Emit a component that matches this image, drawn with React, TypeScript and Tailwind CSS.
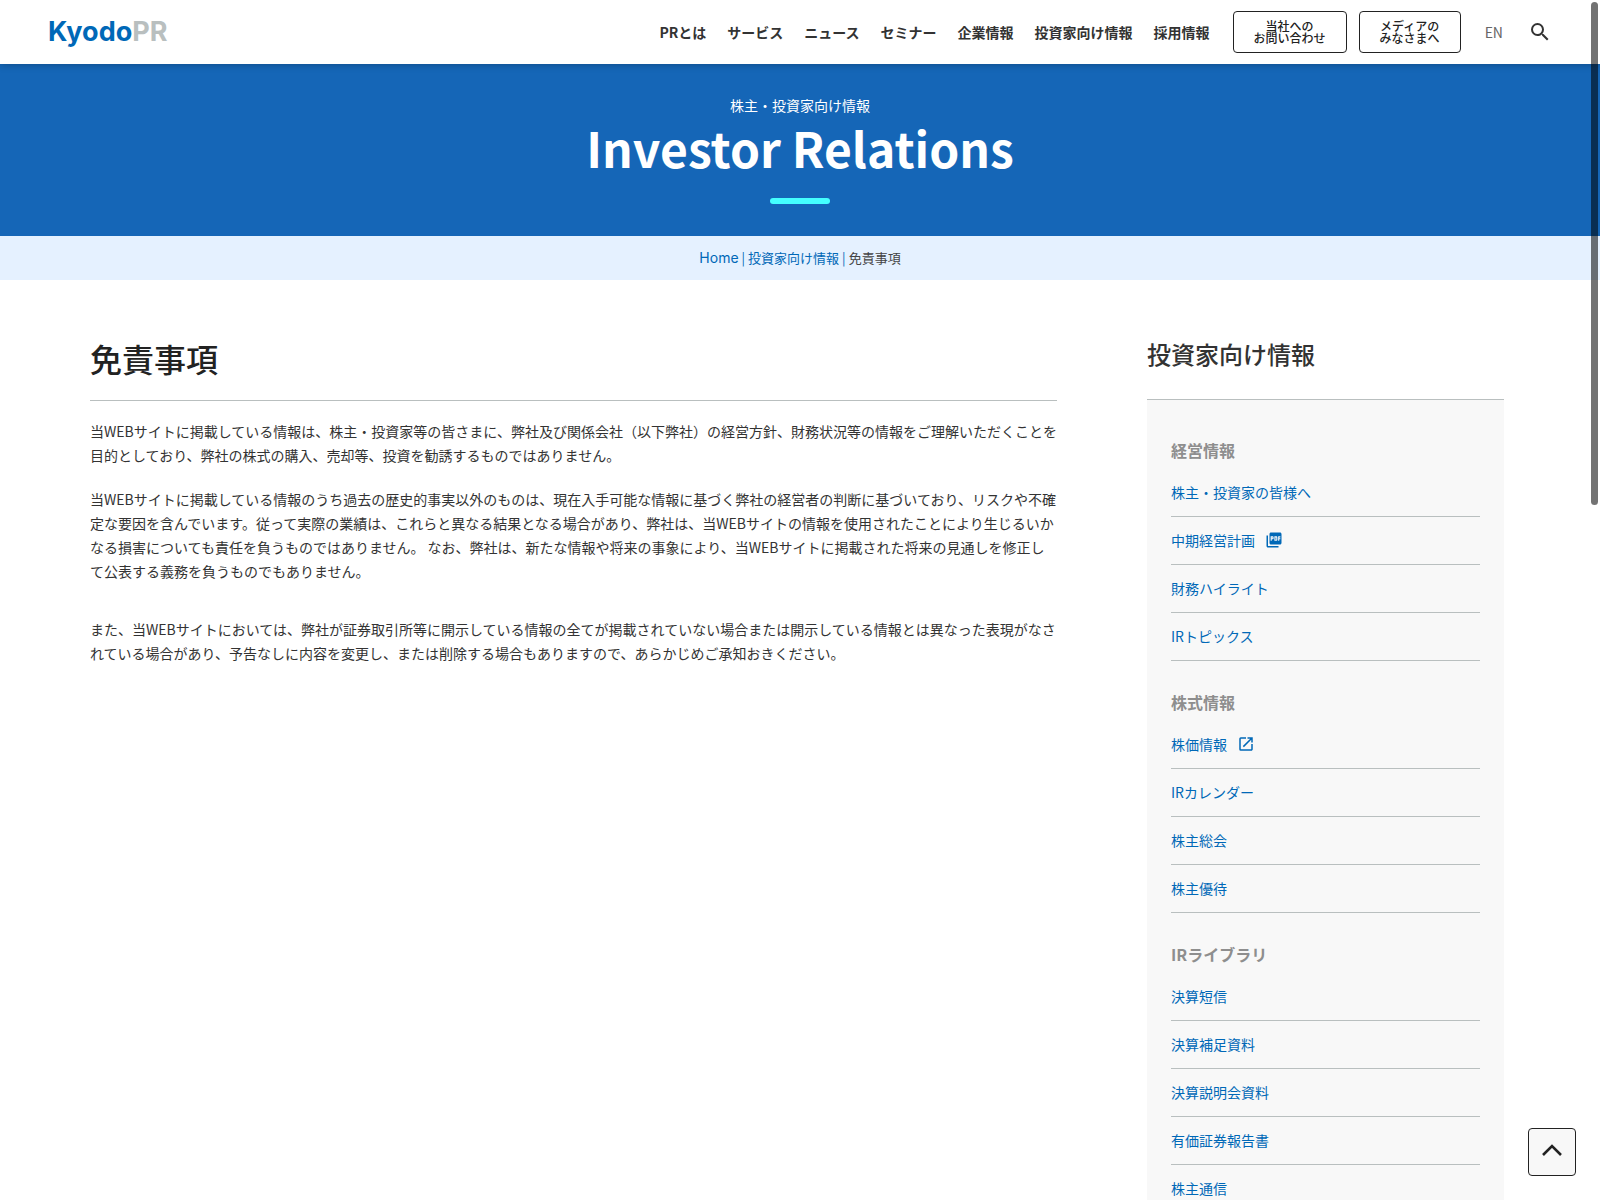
import { MdOpenInNew, MdPictureAsPdf, MdSearch } from 'react-icons/md'

interface SideLink {
  label: string
  icon?: 'pdf' | 'external'
}

interface SideSection {
  title: string
  links: SideLink[]
}

const navItems = ['PRとは', 'サービス', 'ニュース', 'セミナー', '企業情報', '投資家向け情報', '採用情報']

const sections: SideSection[] = [
  {
    title: '経営情報',
    links: [
      { label: '株主・投資家の皆様へ' },
      { label: '中期経営計画', icon: 'pdf' },
      { label: '財務ハイライト' },
      { label: 'IRトピックス' },
    ],
  },
  {
    title: '株式情報',
    links: [
      { label: '株価情報', icon: 'external' },
      { label: 'IRカレンダー' },
      { label: '株主総会' },
      { label: '株主優待' },
    ],
  },
  {
    title: 'IRライブラリ',
    links: [
      { label: '決算短信' },
      { label: '決算補足資料' },
      { label: '決算説明会資料' },
      { label: '有価証券報告書' },
      { label: '株主通信' },
    ],
  },
]

function Header() {
  return (
    <header className="relative z-10 flex h-16 items-center justify-between bg-white px-12 shadow-[0_0_8px_rgba(0,0,0,0.3)]">
      <a href="#" className="pb-px font-['Inter',sans-serif] text-[27px] leading-8 font-bold text-[#0068b7]">
        Kyodo<span className="text-[#b9bfbf]">PR</span>
      </a>
      <div className="flex items-center">
        <nav className="flex gap-[21px] text-sm font-bold text-[#333]">
          {navItems.map((item) => (
            <a key={item} href="#">{item}</a>
          ))}
        </nav>
        <div className="ml-[23px] flex gap-3 text-center text-xs leading-3 font-medium text-[#222]">
          <a href="#" className="rounded border border-[#222] px-5 py-2">
            当社への<br />お問い合わせ
          </a>
          <a href="#" className="rounded border border-[#222] px-5 py-2">
            メディアの<br />みなさまへ
          </a>
        </div>
        <a href="#" className="ml-6 text-sm text-[#666]">EN</a>
        <button type="button" aria-label="検索" className="ml-[25px] text-2xl text-[#333]">
          <MdSearch />
        </button>
      </div>
    </header>
  )
}

function Hero() {
  return (
    <div className="flex h-[172px] flex-col items-center bg-[#1566b7] pt-[29px] text-white">
      <p className="text-sm leading-6">株主・投資家向け情報</p>
      <p className="text-5xl leading-[60px] font-bold">Investor Relations</p>
      <span className="mt-[21px] h-[6px] w-[60px] rounded-full bg-[#44ffff]" />
    </div>
  )
}

function Breadcrumb() {
  return (
    <nav className="flex h-11 items-center justify-center gap-[3px] bg-[#e5f1ff] pb-px text-[13px] text-[#0068b7]">
      <a href="#" className="font-['Inter',sans-serif] text-sm">Home</a>
      <span>|</span>
      <a href="#">投資家向け情報</a>
      <span>|</span>
      <span className="text-[#444]">免責事項</span>
    </nav>
  )
}

function Sidebar() {
  return (
    <aside className="w-[357px] shrink-0">
      <h2 className="border-b border-[#b9bfbf] pt-[54px] pb-[25px] text-2xl leading-10 font-medium text-[#333]">
        投資家向け情報
      </h2>
      <div className="bg-[#f8f8f8] px-6 pt-[9px] pb-12">
        {sections.map((section) => (
          <section key={section.title}>
            <h3 className="pt-[27px] pb-[5px] leading-7 font-bold text-[#8e8e8e]">{section.title}</h3>
            <ul>
              {section.links.map((link) => (
                <li key={link.label} className="flex h-12 items-center border-b border-[#b9bfbf] pb-[2px]">
                  <a href="#" className="flex items-center gap-2.5 text-sm text-[#0068b7]">
                    {link.label}
                    {link.icon === 'pdf' && <MdPictureAsPdf className="text-lg" />}
                    {link.icon === 'external' && <MdOpenInNew className="text-lg" />}
                  </a>
                </li>
              ))}
            </ul>
          </section>
        ))}
      </div>
    </aside>
  )
}

export default function App() {
  return (
    <div
      lang="ja"
      className="h-screen overflow-y-auto bg-white font-['Noto_Sans_CJK_JP',sans-serif] text-[#333] [scrollbar-width:none]"
    >
      <Header />
      <Hero />
      <Breadcrumb />
      <div className="flex gap-[90px] pr-24 pl-[90px]">
        <main className="flex-1">
          <h1 className="border-b border-[#b9bfbf] pt-[56px] pb-5 text-[32px] leading-[44px] font-medium text-[#222]">
            免責事項
          </h1>
          <div className="mt-[18px] text-sm leading-6">
            <p>
              当WEBサイトに掲載している情報は、株主・投資家等の皆さまに、弊社及び関係会社（以下弊社）の経営方針、財務状況等の情報をご理解いただくことを目的としており、弊社の株式の購入、売却等、投資を勧誘するものではありません。
            </p>
            <p className="mt-5">
              当WEBサイトに掲載している情報のうち過去の歴史的事実以外のものは、現在入手可能な情報に基づく弊社の経営者の判断に基づいており、リスクや不確定な要因を含んでいます。従って実際の業績は、これらと異なる結果となる場合があり、弊社は、当WEBサイトの情報を使用されたことにより生じるいかなる損害についても責任を負うものではありません。 なお、弊社は、新たな情報や将来の事象により、当WEBサイトに掲載された将来の見通しを修正して公表する義務を負うものでもありません。
            </p>
            <p className="mt-[34px]">
              また、当WEBサイトにおいては、弊社が証券取引所等に開示している情報の全てが掲載されていない場合または開示している情報とは異なった表現がなされている場合があり、予告なしに内容を変更し、または削除する場合もありますので、あらかじめご承知おきください。
            </p>
          </div>
        </main>
        <Sidebar />
      </div>

      <button
        type="button"
        aria-label="ページの先頭へ"
        className="fixed right-6 bottom-6 z-20 flex size-12 items-center justify-center rounded border border-[#222] bg-[#f8f8f8]"
      >
        <svg viewBox="0 0 20 12" className="mb-1 h-3 w-5" fill="none" stroke="#222" strokeWidth="2.6">
          <path d="M1 11 10 2l9 9" />
        </svg>
      </button>
      <div className="fixed top-[2px] right-[2px] z-30 h-[503px] w-[7px] rounded-full bg-black/55" />
    </div>
  )
}
